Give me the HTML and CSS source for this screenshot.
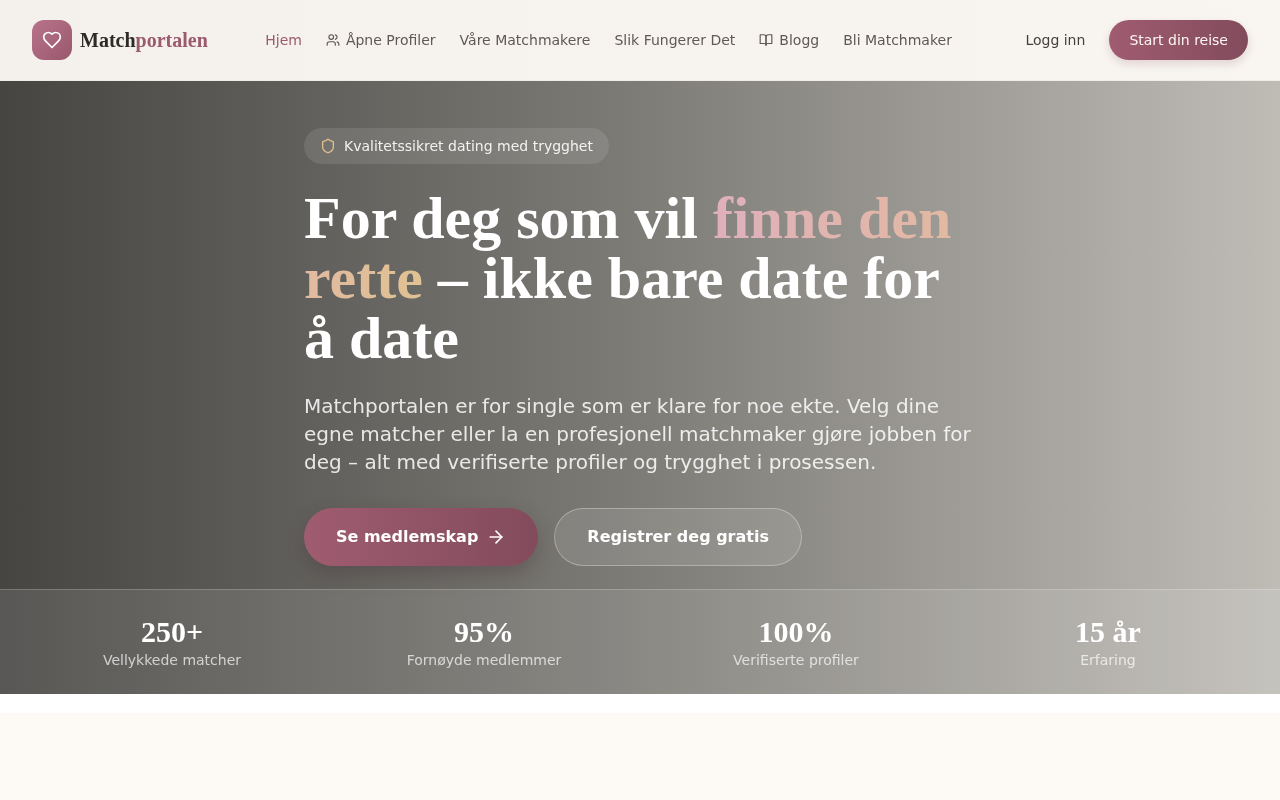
FILE: index.html
```html
<!DOCTYPE html>
<html lang="no">
<head>
  <meta charset="utf-8">
  <title>Matchportalen</title>
  <link rel="stylesheet" href="styles.css">
</head>
<body>
  <header class="topbar">
    <a class="brand" href="#">
      <span class="brand-mark">
        <svg class="icon" width="20" height="20" viewBox="0 0 24 24"><path d="M19 14c1.49-1.46 3-3.21 3-5.5A5.5 5.5 0 0 0 16.5 3c-1.76 0-3 .5-4.5 2-1.5-1.5-2.74-2-4.5-2A5.5 5.5 0 0 0 2 8.5c0 2.3 1.5 4.05 3 5.5l7 7Z"/></svg>
      </span>
      <span class="brand-name">Match<span class="brand-accent">portalen</span></span>
    </a>
    <nav class="nav">
      <a class="nav-link active" href="#">Hjem</a>
      <a class="nav-link" href="#">
        <svg class="icon" width="14" height="14" viewBox="0 0 24 24"><path d="M16 21v-2a4 4 0 0 0-4-4H6a4 4 0 0 0-4 4v2"/><circle cx="9" cy="7" r="4"/><path d="M22 21v-2a4 4 0 0 0-3-3.87"/><path d="M16 3.13a4 4 0 0 1 0 7.75"/></svg>
        Åpne Profiler
      </a>
      <a class="nav-link" href="#">Våre Matchmakere</a>
      <a class="nav-link" href="#">Slik Fungerer Det</a>
      <a class="nav-link" href="#">
        <svg class="icon" width="14" height="14" viewBox="0 0 24 24"><path d="M2 3h6a4 4 0 0 1 4 4v14a3 3 0 0 0-3-3H2z"/><path d="M22 3h-6a4 4 0 0 0-4 4v14a3 3 0 0 1 3-3h7z"/></svg>
        Blogg
      </a>
      <a class="nav-link" href="#">Bli Matchmaker</a>
    </nav>
    <div class="actions">
      <a class="login" href="#">Logg inn</a>
      <a class="start" href="#">Start din reise</a>
    </div>
  </header>

  <section class="hero">
    <div class="hero-inner">
      <div class="badge">
        <svg class="icon badge-icon" width="16" height="16" viewBox="0 0 24 24"><path d="M20 13c0 5-3.5 7.5-7.66 8.95a1 1 0 0 1-.67-.01C7.5 20.5 4 18 4 13V6a1 1 0 0 1 1-1c2 0 4.5-1.2 6.24-2.72a1.17 1.17 0 0 1 1.52 0C14.51 3.81 17 5 19 5a1 1 0 0 1 1 1z"/></svg>
        Kvalitetssikret dating med trygghet
      </div>
      <h1 class="title">For deg som vil <span class="title-accent">finne den rette</span> – ikke bare date for å date</h1>
      <p class="lead">Matchportalen er for single som er klare for noe ekte. Velg dine egne matcher eller la en profesjonell matchmaker gjøre jobben for deg – alt med verifiserte profiler og trygghet i prosessen.</p>
      <div class="cta-row">
        <a class="cta cta-primary" href="#">
          <span class="cta-text">Se medlemskap</span>
          <svg class="icon" width="20" height="20" viewBox="0 0 24 24"><path d="M5 12h14"/><path d="m12 5 7 7-7 7"/></svg>
        </a>
        <a class="cta cta-ghost" href="#"><span class="cta-text">Registrer deg gratis</span></a>
      </div>
    </div>
    <div class="stats">
      <div class="stat"><div class="stat-num">250+</div><div class="stat-label">Vellykkede matcher</div></div>
      <div class="stat"><div class="stat-num">95%</div><div class="stat-label">Fornøyde medlemmer</div></div>
      <div class="stat"><div class="stat-num">100%</div><div class="stat-label">Verifiserte profiler</div></div>
      <div class="stat"><div class="stat-num">15 år</div><div class="stat-label">Erfaring</div></div>
    </div>
  </section>

  <div class="next-section"></div>
</body>
</html>
```

FILE: styles.css
```css
* { box-sizing: border-box; }
html, body { height: 100%; }
body { margin: 0; background: #fff; font-family: "DejaVu Sans", sans-serif; display: flex; flex-direction: column; overflow: hidden; }
a { text-decoration: none; color: inherit; }
.icon { fill: none; stroke: currentColor; stroke-width: 2; stroke-linecap: round; stroke-linejoin: round; flex-shrink: 0; }

.topbar { height: 81px; padding: 0 32px; display: flex; align-items: center; justify-content: space-between; background: linear-gradient(90deg, #f4f0ec, #f9f6f1); border-bottom: 1px solid #f1ece6; will-change: transform; }
.brand { display: flex; align-items: center; gap: 8px; }
.brand-mark { width: 40px; height: 40px; border-radius: 12px; display: flex; align-items: center; justify-content: center; color: #fff; background: linear-gradient(135deg, #b8738a, #99586d); }
.brand-name { font: bold 20px "Liberation Serif", serif; color: #2e2a27; }
.brand-accent { color: #9b5a6e; }

.nav { display: flex; align-items: center; gap: 24px; }
.nav-link { display: flex; align-items: center; gap: 6px; font-size: 14px; line-height: 20px; color: #5f5853; }
.nav-link.active { color: #9b5a6e; }

.actions { display: flex; align-items: center; gap: 8px; }
.login { padding: 10px 16px; font-size: 14px; line-height: 20px; color: #45403c; }
.start { padding: 10px 20px; font-size: 14px; line-height: 20px; color: #fdf5f3; border-radius: 20px; background: linear-gradient(90deg, #a05c71, #824b5c); box-shadow: 0 4px 10px rgba(130, 75, 92, .2); }

.hero { background: linear-gradient(90deg, #464542 0%, #7e7c77 50%, #bfbcb6 100%); }
.hero-inner { width: 672px; margin: 0 auto; padding: 47px 0 23px; will-change: transform; }
.badge { display: inline-flex; align-items: center; gap: 8px; height: 36px; padding: 0 16px; border-radius: 18px; background: rgba(255, 255, 255, .1); font-size: 14px; color: rgba(255, 255, 255, .9); }
.badge-icon { color: #e0c08f; }
.title { margin: 24px 0; font: bold 60px/60px "Liberation Serif", serif; color: #fff; }
.title-accent { color: transparent; background: linear-gradient(90deg, #dfb0bd, #e2b8a4 60%, #e0c292); -webkit-background-clip: text; background-clip: text; }
.lead { margin: 0 0 32px; font-size: 20px; line-height: 28px; color: rgba(255, 255, 255, .85); }
.cta-row { display: flex; gap: 16px; }
.cta { height: 58px; padding: 0 32px; display: flex; align-items: center; gap: 8px; border-radius: 29px; font-size: 16px; font-weight: bold; color: #fff; }
.cta-text { line-height: 24px; padding-bottom: 1px; }
.cta-primary { background: linear-gradient(90deg, #a05c71, #824b5c); box-shadow: 0 8px 20px rgba(60, 40, 45, .3); }
.cta-ghost { background: rgba(255, 255, 255, .1); border: 1px solid rgba(255, 255, 255, .3); }

.stats { display: grid; grid-template-columns: repeat(4, 1fr); gap: 32px; padding: 24px 32px; border-top: 1px solid rgba(255, 255, 255, .2); background: rgba(255, 255, 255, .1); text-align: center; will-change: transform; }
.stat-num { font: bold 30px/36px "Liberation Serif", serif; color: #fff; }
.stat-label { font-size: 14px; line-height: 20px; color: rgba(255, 255, 255, .7); }

.next-section { flex: 1; margin-top: 19px; background: #fdfaf5; }
```
